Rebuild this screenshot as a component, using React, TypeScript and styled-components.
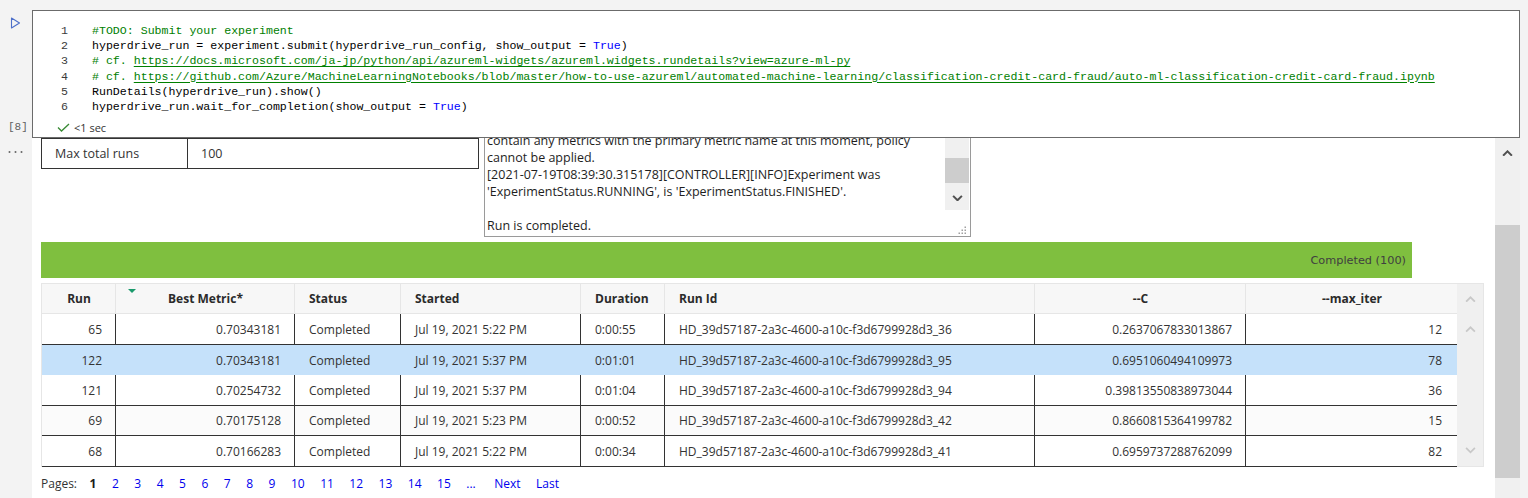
import React from "react";
import styled, { createGlobalStyle } from "styled-components";

const UI = `"Open Sans", "Noto Sans", "Liberation Sans", sans-serif`;
const MONO = `"Liberation Mono", "DejaVu Sans Mono", monospace`;

const GlobalStyle = createGlobalStyle`
  html, body { margin: 0; padding: 0; background: #f3f3f3; }
  body { font-family: ${UI}; }
  *, *::before, *::after { box-sizing: border-box; }
`;

const Page = styled.div`
  width: 1528px;
  height: 498px;
  overflow: hidden;
  background: #f3f3f3;
  display: flex;
  flex-direction: column;
`;

/* ---------- code cell ---------- */
const CellRow = styled.div`
  display: flex;
  height: 138px;
  flex: none;
  padding: 10px 8px 0 0;
`;

const Gutter = styled.div`
  width: 32px;
  flex: none;
  display: flex;
  flex-direction: column;
  justify-content: space-between;
`;

const RunButton = styled.button`
  all: unset;
  display: block;
  width: 11px;
  height: 12px;
  margin: 7px 0 0 10px;
  cursor: pointer;
  svg { display: block; }
`;

const ExecCount = styled.div`
  font-family: ${MONO};
  font-size: 11px;
  line-height: 14px;
  color: #616161;
  margin: 0 0 4px 8px;
`;

const CodeBox = styled.div`
  flex: 1;
  background: #fff;
  border: 1px solid #6b6b6b;
  padding-top: 12px;
  display: flex;
  flex-direction: column;
`;

const CodeLine = styled.div`
  display: flex;
  height: 15.2px;
  line-height: 15.2px;
  font-family: ${MONO};
  font-size: 11.6px;
  white-space: pre;
`;

const LineNo = styled.span`
  width: 35px;
  flex: none;
  text-align: right;
  color: #3b3b3b;
`;

const CodeText = styled.span`
  margin-left: 24px;
  color: #000;
`;

const Comment = styled.span`
  color: #008000;
`;

const CodeLink = styled.span`
  color: #008000;
  text-decoration: underline;
  text-decoration-color: #008000;
  text-underline-offset: 2px;
`;

const Kw = styled.span`
  color: #0000ff;
`;

const StatusLine = styled.div`
  display: flex;
  align-items: center;
  gap: 4px;
  height: 14px;
  margin-top: 6px;
  padding-left: 24px;
  font-size: 11px;
  color: #333;
  svg { display: block; }
`;

/* ---------- output ---------- */
const OutputRow = styled.div`
  display: flex;
  flex: 1;
  min-height: 0;
  padding-right: 8px;
`;

const OutGutter = styled.div`
  width: 32px;
  flex: none;
  padding: 12px 0 0 8px;
  svg { display: block; }
`;

const OutputPanel = styled.div`
  flex: 1;
  background: #fff;
  overflow: hidden;
  padding-left: 9px;
`;

const OutputContent = styled.div`
  margin-top: -31px;
  display: flex;
  flex-direction: column;
  width: 1443px;
`;

const TopRow = styled.div`
  display: flex;
  align-items: flex-start;
  gap: 5px;
`;

const PropsTable = styled.div`
  width: 438px;
  border: 1px solid #333;
  font-size: 12.5px;
  color: #333;
`;

const PropsRow = styled.div<{ $h: number }>`
  display: flex;
  height: ${(p) => p.$h}px;
  & + & { border-top: 1px solid #333; }
`;

const PropsLabel = styled.div`
  width: 146px;
  border-right: 1px solid #333;
  padding-left: 13px;
  display: flex;
  align-items: center;
`;

const PropsValue = styled.div`
  flex: 1;
  padding-left: 13px;
  display: flex;
  align-items: center;
`;

const LogBox = styled.div`
  width: 487px;
  height: 130px;
  border: 1px solid #9a9a9a;
  display: flex;
  background: #fff;
`;

const LogText = styled.div`
  flex: 1;
  overflow: hidden;
  display: flex;
  flex-direction: column;
  justify-content: flex-end;
  padding: 0 0 2px 2px;
  font-size: 12.5px;
  line-height: 17px;
  color: #1e1e1e;
  white-space: pre;
`;

const LogLine = styled.div`
  height: 17px;
  flex: none;
`;

const LogSide = styled.div`
  width: 24px;
  margin-right: 1px;
  display: flex;
  flex-direction: column;
`;

const LogTrack = styled.div`
  height: 102px;
  background: #f0f0f0;
  display: flex;
  flex-direction: column;
  padding-top: 50px;
`;

const LogThumb = styled.div`
  height: 25px;
  background: #cdcdcd;
`;

const ArrowBox = styled.div<{ $h: number }>`
  height: ${(p) => p.$h}px;
  flex: none;
  display: flex;
  align-items: center;
  justify-content: center;
  svg { display: block; }
`;

const Spacer = styled.div`
  flex: 1;
`;

const GripCorner = styled.div`
  flex: 1;
  display: flex;
  align-items: flex-end;
  justify-content: flex-end;
  padding: 0 3px 2px 0;
  svg { display: block; }
`;

const Progress = styled.div`
  margin-top: 5px;
  width: 1371px;
  height: 36px;
  background: #7fbf3f;
  display: flex;
  align-items: center;
  justify-content: flex-end;
  padding-right: 6px;
  font-family: "DejaVu Sans", Verdana, sans-serif;
  font-size: 11.3px;
  color: #404040;
`;

const GridWrap = styled.div`
  margin-top: 5px;
  display: flex;
  align-items: flex-start;
`;

const GridTable = styled.div`
  width: 1416px;
  border-left: 1px solid #e6e6e6;
  font-size: 12px;
  color: #333;
`;

const COLS = "74px 179px 106px 180px 84px 370px 211px 211px";

const HeaderRow = styled.div`
  display: grid;
  grid-template-columns: ${COLS};
  height: 31px;
  background: #f7f7f7;
  border-top: 1px solid #e6e6e6;
  border-bottom: 1px solid #e6e6e6;
`;

type Align = "left" | "right" | "center";

const HeadCell = styled.div<{ $align: Align }>`
  position: relative;
  display: flex;
  align-items: center;
  justify-content: ${(p) =>
    p.$align === "center" ? "center" : p.$align === "right" ? "flex-end" : "flex-start"};
  padding: 0 13px 0 14px;
  font-weight: 700;
  color: #2b2b2b;
  border-right: 1px solid #e6e6e6;
  &:last-child { border-right: none; }
`;

const SortMark = styled.span`
  position: absolute;
  left: 12px;
  top: 5px;
  width: 0;
  height: 0;
  border-left: 4px solid transparent;
  border-right: 4px solid transparent;
  border-top: 4px solid #1a9a6c;
`;

const BodyRow = styled.div<{ $h: number; $selected?: boolean; $alt?: boolean }>`
  display: grid;
  grid-template-columns: ${COLS};
  height: ${(p) => p.$h}px;
  background: ${(p) => (p.$selected ? "#c5e1fa" : p.$alt ? "#fbfbfb" : "#fff")};
  border-bottom: ${(p) => (p.$selected ? "none" : "1px solid #333")};
`;

const BodyCell = styled.div<{ $align: Align; $selected?: boolean }>`
  display: flex;
  align-items: center;
  justify-content: ${(p) => (p.$align === "right" ? "flex-end" : "flex-start")};
  padding: 0 13px 0 14px;
  white-space: nowrap;
  border-right: 1px solid ${(p) => (p.$selected ? "transparent" : "#333")};
  &:last-child { border-right: none; padding-right: 15px; }
`;

const TableScroll = styled.div`
  width: 27px;
  height: 184px;
  background: #f0f0f0;
  border-top: 1px solid #e6e6e6;
  border-right: 1px solid #e6e6e6;
  border-bottom: 1px solid #e6e6e6;
  display: flex;
  flex-direction: column;
`;

const Pager = styled.div`
  margin-top: 8px;
  display: flex;
  align-items: center;
  gap: 15.5px;
  height: 16px;
  font-size: 12px;
`;

const PagesLabel = styled.span`
  color: #333;
  margin-right: -3px;
`;

const PageLink = styled.a<{ $current?: boolean; $wide?: boolean }>`
  color: ${(p) => (p.$current ? "#1a1a1a" : "#0000ee")};
  font-weight: ${(p) => (p.$current ? 700 : 400)};
  text-decoration: none;
  margin-left: ${(p) => (p.$wide ? "3px" : "0")};
  cursor: pointer;
`;

const OutScroll = styled.div`
  width: 25px;
  flex: none;
  background: #f0f0f0;
  display: flex;
  flex-direction: column;
`;

const OutThumb = styled.div`
  margin-top: 57px;
  height: 253px;
  background: #cdcdcd;
`;

/* ---------- icons ---------- */
const Chevron = ({ dir, color, w = 10, sw = 1.6 }: { dir: "up" | "down"; color: string; w?: number; sw?: number }) => (
  <svg width={w} height={w * 0.6} viewBox="0 0 10 6">
    {dir === "up" ? (
      <polyline points="1,5.2 5,1.2 9,5.2" fill="none" stroke={color} strokeWidth={sw} />
    ) : (
      <polyline points="1,0.8 5,4.8 9,0.8" fill="none" stroke={color} strokeWidth={sw} />
    )}
  </svg>
);

const RunIcon = () => (
  <svg width="11" height="12" viewBox="0 0 11 12">
    <polygon points="1.5,1 9.5,6 1.5,11" fill="none" stroke="#4d6fc9" strokeWidth="1.1" strokeLinejoin="round" />
  </svg>
);

const CheckIcon = () => (
  <svg width="13" height="9" viewBox="0 0 13 9">
    <polyline points="1,4.5 4.5,8 12,1" fill="none" stroke="#388a34" strokeWidth="1.3" />
  </svg>
);

const MoreIcon = () => (
  <svg width="15" height="4" viewBox="0 0 15 4">
    <circle cx="1.5" cy="2" r="1" fill="#666" />
    <circle cx="7.5" cy="2" r="1" fill="#666" />
    <circle cx="13.5" cy="2" r="1" fill="#666" />
  </svg>
);

const GripIcon = () => (
  <svg width="8" height="8" viewBox="0 0 8 8">
    {[
      [6.5, 0.5],
      [3.5, 3.5],
      [6.5, 3.5],
      [0.5, 6.5],
      [3.5, 6.5],
      [6.5, 6.5],
    ].map(([x, y], i) => (
      <rect key={i} x={x} y={y} width="1.5" height="1.5" fill="#a0a0a0" />
    ))}
  </svg>
);

/* ---------- data ---------- */
const LOG_LINES = [
  "contain any metrics with the primary metric name at this moment, policy",
  "cannot be applied.",
  "[2021-07-19T08:39:30.315178][CONTROLLER][INFO]Experiment was",
  "'ExperimentStatus.RUNNING', is 'ExperimentStatus.FINISHED'.",
  "",
  "Run is completed.",
];

type Col = { key: string; title: string; head: Align; body: Align };

const COLUMNS: Col[] = [
  { key: "run", title: "Run", head: "center", body: "right" },
  { key: "metric", title: "Best Metric*", head: "center", body: "right" },
  { key: "status", title: "Status", head: "left", body: "left" },
  { key: "started", title: "Started", head: "left", body: "left" },
  { key: "duration", title: "Duration", head: "left", body: "left" },
  { key: "id", title: "Run Id", head: "left", body: "left" },
  { key: "c", title: "--C", head: "center", body: "right" },
  { key: "iter", title: "--max_iter", head: "center", body: "right" },
];

type RunRow = Record<string, string>;

const RUNS: RunRow[] = [
  { run: "65", metric: "0.70343181", status: "Completed", started: "Jul 19, 2021 5:22 PM", duration: "0:00:55", id: "HD_39d57187-2a3c-4600-a10c-f3d6799928d3_36", c: "0.2637067833013867", iter: "12" },
  { run: "122", metric: "0.70343181", status: "Completed", started: "Jul 19, 2021 5:37 PM", duration: "0:01:01", id: "HD_39d57187-2a3c-4600-a10c-f3d6799928d3_95", c: "0.6951060494109973", iter: "78" },
  { run: "121", metric: "0.70254732", status: "Completed", started: "Jul 19, 2021 5:37 PM", duration: "0:01:04", id: "HD_39d57187-2a3c-4600-a10c-f3d6799928d3_94", c: "0.39813550838973044", iter: "36" },
  { run: "69", metric: "0.70175128", status: "Completed", started: "Jul 19, 2021 5:23 PM", duration: "0:00:52", id: "HD_39d57187-2a3c-4600-a10c-f3d6799928d3_42", c: "0.8660815364199782", iter: "15" },
  { run: "68", metric: "0.70166283", status: "Completed", started: "Jul 19, 2021 5:22 PM", duration: "0:00:34", id: "HD_39d57187-2a3c-4600-a10c-f3d6799928d3_41", c: "0.6959737288762099", iter: "82" },
];

const ROW_H = [31, 30, 31, 30, 31];

const PAGES = ["1", "2", "3", "4", "5", "6", "7", "8", "9", "10", "11", "12", "13", "14", "15", "..."];

export default function App() {
  return (
    <>
      <GlobalStyle />
      <Page>
        <CellRow>
          <Gutter>
            <RunButton aria-label="Run cell">
              <RunIcon />
            </RunButton>
            <ExecCount>[8]</ExecCount>
          </Gutter>
          <CodeBox>
            <CodeLine>
              <LineNo>1</LineNo>
              <CodeText>
                <Comment>#TODO: Submit your experiment</Comment>
              </CodeText>
            </CodeLine>
            <CodeLine>
              <LineNo>2</LineNo>
              <CodeText>
                hyperdrive_run = experiment.submit(hyperdrive_run_config, show_output = <Kw>True</Kw>)
              </CodeText>
            </CodeLine>
            <CodeLine>
              <LineNo>3</LineNo>
              <CodeText>
                <Comment># cf. </Comment>
                <CodeLink>https://docs.microsoft.com/ja-jp/python/api/azureml-widgets/azureml.widgets.rundetails?view=azure-ml-py</CodeLink>
              </CodeText>
            </CodeLine>
            <CodeLine>
              <LineNo>4</LineNo>
              <CodeText>
                <Comment># cf. </Comment>
                <CodeLink>
                  https://github.com/Azure/MachineLearningNotebooks/blob/master/how-to-use-azureml/automated-machine-learning/classification-credit-card-fraud/auto-ml-classification-credit-card-fraud.ipynb
                </CodeLink>
              </CodeText>
            </CodeLine>
            <CodeLine>
              <LineNo>5</LineNo>
              <CodeText>RunDetails(hyperdrive_run).show()</CodeText>
            </CodeLine>
            <CodeLine>
              <LineNo>6</LineNo>
              <CodeText>
                hyperdrive_run.wait_for_completion(show_output = <Kw>True</Kw>)
              </CodeText>
            </CodeLine>
            <StatusLine>
              <CheckIcon />
              <span>&lt;1 sec</span>
            </StatusLine>
          </CodeBox>
        </CellRow>

        <OutputRow>
          <OutGutter>
            <MoreIcon />
          </OutGutter>
          <OutputPanel>
            <OutputContent>
              <TopRow>
                <PropsTable>
                  <PropsRow $h={30}>
                    <PropsLabel />
                    <PropsValue />
                  </PropsRow>
                  <PropsRow $h={30}>
                    <PropsLabel>Max total runs</PropsLabel>
                    <PropsValue>100</PropsValue>
                  </PropsRow>
                </PropsTable>
                <LogBox>
                  <LogText>
                    {LOG_LINES.map((l, i) => (
                      <LogLine key={i}>{l}</LogLine>
                    ))}
                  </LogText>
                  <LogSide>
                    <LogTrack>
                      <LogThumb />
                      <Spacer />
                      <ArrowBox $h={24}>
                        <Chevron dir="down" color="#505050" w={11} sw={1.8} />
                      </ArrowBox>
                    </LogTrack>
                    <GripCorner>
                      <GripIcon />
                    </GripCorner>
                  </LogSide>
                </LogBox>
              </TopRow>

              <Progress>Completed (100)</Progress>

              <GridWrap>
                <GridTable>
                  <HeaderRow>
                    {COLUMNS.map((c) => (
                      <HeadCell key={c.key} $align={c.head}>
                        {c.key === "metric" && <SortMark />}
                        {c.title}
                      </HeadCell>
                    ))}
                  </HeaderRow>
                  {RUNS.map((r, i) => (
                    <BodyRow key={r.id} $h={ROW_H[i]} $selected={i === 1} $alt={i === 3}>
                      {COLUMNS.map((c) => (
                        <BodyCell key={c.key} $align={c.body} $selected={i === 1}>
                          {r[c.key]}
                        </BodyCell>
                      ))}
                    </BodyRow>
                  ))}
                </GridTable>
                <TableScroll>
                  <ArrowBox $h={30}>
                    <Chevron dir="up" color="#c8c8c8" w={11} sw={1.6} />
                  </ArrowBox>
                  <ArrowBox $h={31}>
                    <Chevron dir="up" color="#c8c8c8" w={11} sw={1.6} />
                  </ArrowBox>
                  <Spacer />
                  <ArrowBox $h={31}>
                    <Chevron dir="down" color="#c8c8c8" w={11} sw={1.6} />
                  </ArrowBox>
                </TableScroll>
              </GridWrap>

              <Pager>
                <PagesLabel>Pages:</PagesLabel>
                {PAGES.map((p) => (
                  <PageLink key={p} $current={p === "1"}>
                    {p}
                  </PageLink>
                ))}
                <PageLink $wide>Next</PageLink>
                <PageLink>Last</PageLink>
              </Pager>
            </OutputContent>
          </OutputPanel>
          <OutScroll>
            <ArrowBox $h={30}>
              <Chevron dir="up" color="#505050" w={11} sw={1.8} />
            </ArrowBox>
            <OutThumb />
          </OutScroll>
        </OutputRow>
      </Page>
    </>
  );
}
